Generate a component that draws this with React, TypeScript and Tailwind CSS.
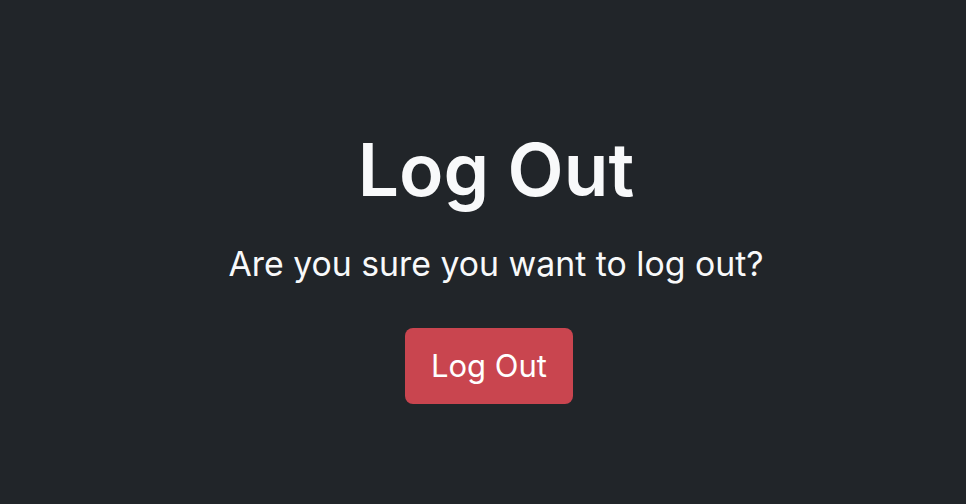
export default function App() {
  return (
    <div
      className="flex h-[504px] w-full flex-col items-center bg-[#212529] pl-[26px] pt-[126px] text-[#f8f9fa]"
      style={{ fontFamily: "Inter, 'Liberation Sans', sans-serif" }}
    >
      <h1 className="text-[73px] font-semibold leading-[1.2]">Log Out</h1>
      <p className="mt-[25px] text-[33.8px] leading-[1.5]">Are you sure you want to log out?</p>
      <button
        type="button"
        className="mr-[14px] mt-[39px] h-[76px] w-[168px] rounded-[8px] bg-[#c9454f] text-[31px] text-white"
      >
        Log Out
      </button>
    </div>
  );
}
